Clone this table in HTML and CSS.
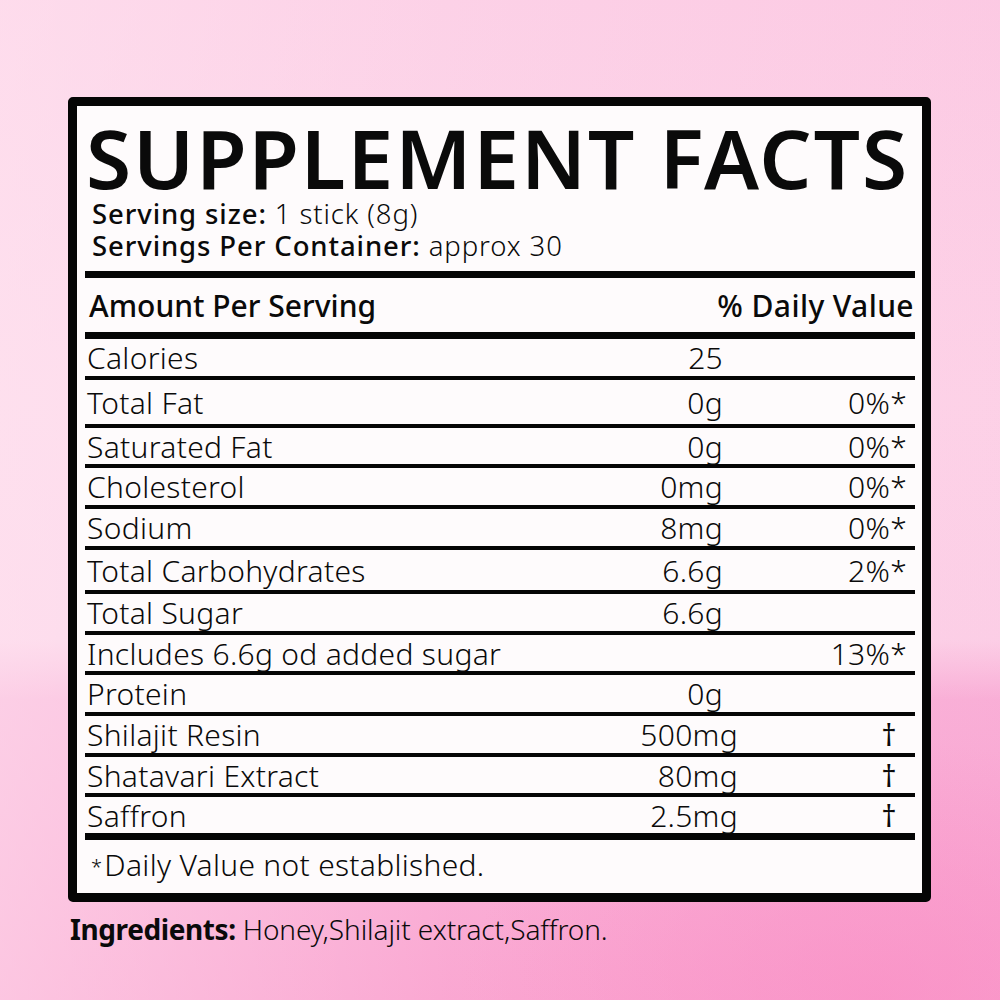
FILE: index.html
```html
<!DOCTYPE html>
<html lang="en">
<head>
<meta charset="utf-8">
<title>Supplement Facts</title>
<link rel="stylesheet" href="styles.css">
</head>
<body>
<main class="page">
  <section class="label">
    <h1 class="title">SUPPLEMENT FACTS</h1>
    <div class="serving">
      <div class="line"><span class="key">Serving size:</span><span class="val">1 stick (8g)</span></div>
      <div class="line"><span class="key">Servings Per Container:</span><span class="val">approx 30</span></div>
    </div>
    <div class="head-row">
      <span>Amount Per Serving</span>
      <span>% Daily Value</span>
    </div>
    <div class="rows">
      <div class="row"><span class="name">Calories</span><span class="amt">25</span><span class="dv"></span></div>
      <div class="row tall"><span class="name">Total Fat</span><span class="amt">0g</span><span class="dv">0%*</span></div>
      <div class="row short"><span class="name">Saturated Fat</span><span class="amt">0g</span><span class="dv">0%*</span></div>
      <div class="row"><span class="name">Cholesterol</span><span class="amt">0mg</span><span class="dv">0%*</span></div>
      <div class="row"><span class="name">Sodium</span><span class="amt">8mg</span><span class="dv">0%*</span></div>
      <div class="row mid"><span class="name">Total Carbohydrates</span><span class="amt">6.6g</span><span class="dv">2%*</span></div>
      <div class="row"><span class="name">Total Sugar</span><span class="amt">6.6g</span><span class="dv"></span></div>
      <div class="row short"><span class="name">Includes 6.6g od added sugar</span><span class="amt"></span><span class="dv">13%*</span></div>
      <div class="row"><span class="name">Protein</span><span class="amt">0g</span><span class="dv"></span></div>
      <div class="row"><span class="name">Shilajit Resin</span><span class="amt wide">500mg</span><span class="dv dagger">†</span></div>
      <div class="row short"><span class="name">Shatavari Extract</span><span class="amt wide">80mg</span><span class="dv dagger">†</span></div>
      <div class="row last"><span class="name">Saffron</span><span class="amt wide">2.5mg</span><span class="dv dagger">†</span></div>
    </div>
    <div class="note"><span class="star">*</span><span>Daily Value not established.</span></div>
  </section>
  <div class="ingredients"><span class="ing-key">Ingredients:</span><span class="ing-val">Honey,Shilajit extract,Saffron.</span></div>
</main>
</body>
</html>
```

FILE: styles.css
```css
* { box-sizing: border-box; }

html, body {
  margin: 0;
  padding: 0;
}

body {
  width: 1000px;
  height: 1000px;
  overflow: hidden;
  font-family: "Noto Sans", "Open Sans", sans-serif;
  color: #0a0a0a;
  background:
    radial-gradient(ellipse 420px 260px at 880px 1000px, rgba(250, 140, 195, 0.55), rgba(250, 140, 195, 0) 100%),
    linear-gradient(90deg, rgba(255, 232, 242, 0.55) 0%, rgba(255, 232, 242, 0.15) 45%, rgba(250, 170, 210, 0.1) 100%),
    linear-gradient(180deg, #fccde5 0%, #fdd5e9 40%, #fcd2e8 64%, #f9afd7 70%, #f99ccc 100%);
}

.page {
  padding: 97px 69px 0 68px;
}

.label {
  width: 863px;
  height: 805px;
  border: 9px solid #050505;
  border-radius: 5px;
  background: #fefbfc;
  padding: 0 7px 0 8px;
  display: flex;
  flex-direction: column;
}

.title {
  margin: 10px 0 0 1px;
  font-size: 82px;
  line-height: 82px;
  font-weight: 600;
  letter-spacing: 1.9px;
  white-space: nowrap;
}

.serving {
  padding-left: 7px;
  padding-bottom: 9px;
  border-bottom: 7px solid #050505;
}

.line {
  display: flex;
  gap: 8px;
  font-size: 27.5px;
  line-height: 32px;
  letter-spacing: 0.9px;
  white-space: nowrap;
}

.line .key {
  font-weight: 500;
}

.line .val {
  font-weight: 300;
}

.head-row {
  height: 61px;
  display: flex;
  justify-content: space-between;
  align-items: center;
  padding: 0 1px 0 4px;
  font-size: 30px;
  font-weight: 500;
  border-bottom: 7px solid #050505;
}

.head-row span:last-child {
  letter-spacing: 0.4px;
}

.rows {
  display: flex;
  flex-direction: column;
}

.row {
  height: 41px;
  display: grid;
  grid-template-columns: 1fr 160px 192px;
  align-items: center;
  padding-left: 2px;
  border-bottom: 4px solid #050505;
  font-size: 30px;
  font-weight: 350;
  line-height: 37px;
  letter-spacing: 0.3px;
  white-space: nowrap;
}

.row.tall { height: 48px; }
.row.mid { height: 44px; }
.row.short { height: 40px; }
.row.last {
  border-bottom-width: 7px;
  height: 43px;
}

.amt {
  text-align: right;
}

.amt.wide {
  margin-right: -15px;
}

.dv {
  text-align: right;
  padding-right: 8px;
}

.dv.dagger {
  padding-right: 18px;
  font-weight: 400;
}

.note {
  display: flex;
  align-items: baseline;
  padding: 6px 0 0 6px;
  font-size: 30px;
  line-height: 37px;
  font-weight: 350;
  letter-spacing: 0.3px;
  white-space: nowrap;
}

.note .star {
  font-size: 20px;
  position: relative;
  top: -2px;
  margin-right: 2px;
}

.ingredients {
  display: flex;
  gap: 7px;
  margin: 9px 0 0 2px;
  font-size: 28px;
  line-height: 36px;
  white-space: nowrap;
}

.ing-key {
  font-weight: 700;
  letter-spacing: -0.4px;
}

.ing-val {
  font-weight: 300;
  letter-spacing: -0.1px;
}
```
